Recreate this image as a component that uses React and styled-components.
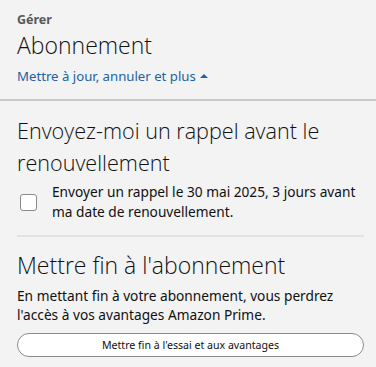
import React from "react";
import styled, { createGlobalStyle } from "styled-components";

const Global = createGlobalStyle`
    body {
        margin: 0;
        background: #f3f3f3;
        font-family: "Noto Sans", "Open Sans", sans-serif;
        color: #0f1111;
    }
`;

const Page = styled.div`
    width: 376px;
    background: #f3f3f3;
`;

const Header = styled.div`
    padding: 11px 12px 13px 17px;
    border-bottom: 2px solid #c9c9c9;
`;

const Eyebrow = styled.div`
    font-size: 12.5px;
    font-weight: 700;
    color: #565959;
    line-height: 18px;
`;

const Title = styled.h1`
    margin: 0;
    font-family: "Open Sans", sans-serif;
    font-weight: 300;
    font-size: 23px;
    line-height: 33px;
`;

const Toggle = styled.a`
    display: inline-flex;
    align-items: center;
    gap: 4px;
    margin-top: 4px;
    font-size: 13.2px;
    line-height: 20px;
    color: #2162a1;
    text-decoration: none;
`;

const Body = styled.div`
    padding: 0 12px 0 17px;
`;

const Section = styled.section`
    padding: ${(p) => (p.last ? "12px 0 8px" : "14px 0 13px")};
    border-bottom: ${(p) => (p.last ? "none" : "2px solid #e3e3e3")};
`;

const Heading = styled.h2`
    margin: 0;
    font-family: "Open Sans", sans-serif;
    font-weight: 300;
    font-size: ${(p) => p.size || "21.6px"};
    line-height: 32px;
`;

const CheckRow = styled.label`
    display: flex;
    align-items: center;
    gap: 15px;
    margin-top: 3px;
    padding-left: 3px;
`;

const Box = styled.span`
    flex: none;
    width: 15px;
    height: 15px;
    border: 1px solid #888c8c;
    border-radius: 3px;
    background: #fff;
`;

const Text = styled.p`
    margin: ${(p) => p.m || "0"};
    font-size: 13.7px;
    line-height: ${(p) => p.lh || "20px"};
`;

const Button = styled.button`
    display: block;
    width: 100%;
    height: 24px;
    margin-top: 9px;
    border: 1px solid #888c8c;
    border-radius: 12px;
    background: #fff;
    font-family: "Noto Sans", sans-serif;
    font-size: 10.6px;
    color: #0f1111;
`;

const Caret = () => (
    <svg width="8" height="4" viewBox="0 0 8 4">
        <path d="M0 4 L4 0 L8 4 Z" fill="#2162a1" />
    </svg>
);

export default function App() {
    return (
        <Page>
            <Global />
            <Header>
                <Eyebrow>Gérer</Eyebrow>
                <Title>Abonnement</Title>
                <Toggle>
                    Mettre à jour, annuler et plus <Caret />
                </Toggle>
            </Header>
            <Body>
                <Section>
                    <Heading>Envoyez-moi un rappel avant le renouvellement</Heading>
                    <CheckRow>
                        <Box />
                        <Text>
                            Envoyer un rappel le 30 mai 2025, 3 jours avant ma date de
                            renouvellement.
                        </Text>
                    </CheckRow>
                </Section>
                <Section last>
                    <Heading size="23px">Mettre fin à l'abonnement</Heading>
                    <Text m="5px 0 0" lh="19px">
                        En mettant fin à votre abonnement, vous perdrez l'accès à vos
                        avantages Amazon Prime.
                    </Text>
                    <Button>Mettre fin à l'essai et aux avantages</Button>
                </Section>
            </Body>
        </Page>
    );
}
